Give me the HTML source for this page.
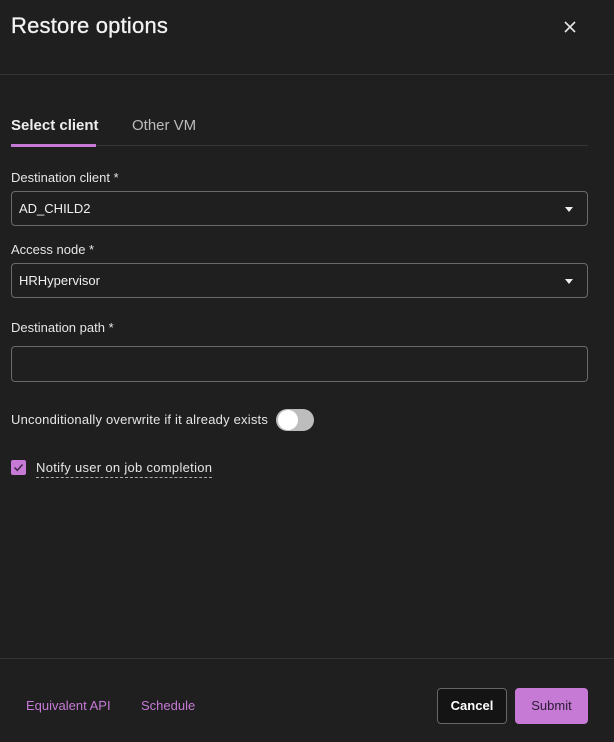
<!DOCTYPE html>
<html><head><style>
body{margin:0;width:614px;height:742px;background:#1f1f1f;font-family:"Liberation Sans",sans-serif;color:#e8e8e8;position:relative;overflow:hidden}
.a{position:absolute}
.lbl{font-size:13px;color:#e6e6e6}
.inp{position:absolute;left:11px;width:577px;height:35px;border:1px solid #6a6a6a;border-radius:4px;box-sizing:border-box;font-size:13px;color:#f0f0f0;padding:9px 7px}
.car{position:absolute;right:14px;top:15px;width:0;height:0;border-left:4px solid transparent;border-right:4px solid transparent;border-top:5px solid #eee}
</style></head><body>
<div class="a" style="left:11px;top:13px;font-size:22px;color:#f2f2f2;letter-spacing:0.2px;-webkit-text-stroke:0.3px #f2f2f2">Restore options</div>
<svg class="a" style="left:564px;top:21px" width="12" height="12" viewBox="0 0 12 12"><path d="M1 1L11 11M11 1L1 11" stroke="#e6e6e6" stroke-width="1.6"/></svg>
<div class="a" style="left:0;top:74px;width:614px;height:1px;background:#333"></div>
<div class="a" style="left:11px;top:117px;font-size:15px;font-weight:bold;color:#eee">Select client</div>
<div class="a" style="left:132px;top:117px;font-size:15px;color:#bbb">Other VM</div>
<div class="a" style="left:11px;top:145px;width:577px;height:1px;background:#363636"></div>
<div class="a" style="left:11px;top:144px;width:85px;height:3px;background:#c67ad6"></div>
<div class="a lbl" style="left:11px;top:170px">Destination client *</div>
<div class="inp" style="top:191px">AD_CHILD2<div class="car"></div></div>
<div class="a lbl" style="left:11px;top:242px">Access node *</div>
<div class="inp" style="top:263px">HRHypervisor<div class="car"></div></div>
<div class="a lbl" style="left:11px;top:320px">Destination path *</div>
<div class="inp" style="top:346px;height:36px"></div>
<div class="a lbl" style="left:11px;top:412px;letter-spacing:0.2px">Unconditionally overwrite if it already exists</div>
<div class="a" style="left:276px;top:409px;width:38px;height:22px;border-radius:11px;background:#bdbdbd"></div>
<div class="a" style="left:278px;top:410px;width:20px;height:20px;border-radius:10px;background:#fff"></div>
<div class="a" style="left:11px;top:460px;width:15px;height:15px;background:#c67ad6;border-radius:2px"><svg width="15" height="15" viewBox="0 0 15 15"><path d="M3.5 7.5L6.3 10.3L11.5 4.5" stroke="#3a2440" stroke-width="1.4" fill="none"/></svg></div>
<div class="a lbl" style="left:36px;top:460px;border-bottom:1px dashed #aaa;padding-bottom:2px;letter-spacing:0.3px">Notify user on job completion</div>
<div class="a" style="left:0;top:658px;width:614px;height:1px;background:#333"></div>
<div class="a" style="left:26px;top:698px;font-size:13px;color:#c67ad6">Equivalent API</div>
<div class="a" style="left:141px;top:698px;font-size:13px;color:#c67ad6">Schedule</div>
<div class="a" style="left:437px;top:688px;width:70px;height:36px;box-sizing:border-box;border:1px solid #666;border-radius:4px;background:#141414;font-size:13px;font-weight:bold;color:#fff;text-align:center;line-height:34px">Cancel</div>
<div class="a" style="left:515px;top:688px;width:73px;height:36px;border-radius:4px;background:#c67ad6;font-size:13px;color:#2a1a33;text-align:center;line-height:36px">Submit</div>
</body></html>
